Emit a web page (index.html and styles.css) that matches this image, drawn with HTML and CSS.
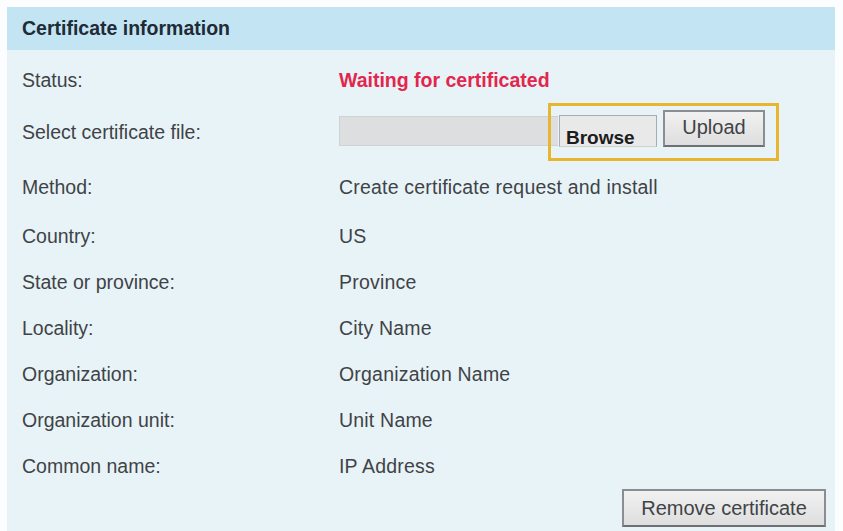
FILE: index.html
```html
<!DOCTYPE html>
<html lang="en">
<head>
  <meta charset="UTF-8" />
  <title>Certificate information</title>
  <link rel="stylesheet" href="styles.css">
</head>
<body>
  <div class="panel">
    <div class="panel-head">Certificate information</div>
    <div class="panel-body">
      <div class="row">
        <div class="label">Status:</div>
        <div class="value status">Waiting for certificated</div>
      </div>
      <div class="row file-row">
        <div class="label">Select certificate file:</div>
        <div class="value">
          <div class="file-path"></div>
          <div class="highlight">
            <button class="browse">Browse</button>
            <button class="btn upload">Upload</button>
          </div>
        </div>
      </div>
      <div class="row method-row">
        <div class="label">Method:</div>
        <div class="value">Create certificate request and install</div>
      </div>
      <div class="row">
        <div class="label">Country:</div>
        <div class="value">US</div>
      </div>
      <div class="row">
        <div class="label">State or province:</div>
        <div class="value">Province</div>
      </div>
      <div class="row">
        <div class="label">Locality:</div>
        <div class="value">City Name</div>
      </div>
      <div class="row">
        <div class="label">Organization:</div>
        <div class="value">Organization Name</div>
      </div>
      <div class="row">
        <div class="label">Organization unit:</div>
        <div class="value">Unit Name</div>
      </div>
      <div class="row">
        <div class="label">Common name:</div>
        <div class="value">IP Address</div>
      </div>
      <div class="actions">
        <button class="btn remove">Remove certificate</button>
      </div>
    </div>
  </div>
</body>
</html>
```

FILE: styles.css
```css
body {
  margin: 0;
  background: #fbfdfe;
  font-family: "Liberation Sans", Arial, sans-serif;
  color: #404346;
}
.panel {
  margin: 7px 8px 0 7px;
  height: 524px;
  background: #e8f3f8;
}
.panel-head {
  height: 43px;
  line-height: 43px;
  padding-left: 15px;
  background: #c3e5f3;
  font-size: 19.5px;
  font-weight: bold;
  color: #1f2b36;
}
.panel-body {
  padding-top: 7px;
}
.row {
  display: flex;
  align-items: center;
  height: 46px;
  font-size: 19.5px;
}
.label {
  width: 317px;
  padding-left: 15px;
}
.value {
  display: flex;
  align-items: center;
  letter-spacing: 0.2px;
}
.status {
  color: #e2264d;
  font-weight: bold;
  letter-spacing: 0;
}
.file-row {
  height: 58px;
}
.method-row {
  height: 52px;
}
.file-path {
  width: 218px;
  height: 28px;
  margin-top: -2px;
  background: #dcdedf;
  border: 1px solid #cfd2d3;
  border-right: none;
}
.highlight {
  display: flex;
  align-items: center;
  gap: 6px;
  margin-left: -10px;
  padding: 8px 11px 11px 8px;
  border: 3px solid #e8b62e;
}
.browse {
  width: 98px;
  height: 32px;
  margin-top: 1px;
  padding: 11px 0 0 6px;
  text-align: left;
  font-family: "Liberation Sans", Arial, sans-serif;
  font-size: 19px;
  font-weight: bold;
  color: #1c1c1c;
  background: #e9e9ea;
  border: 1px solid #a9abb0;
  border-bottom-color: #d0d0d0;
}
.btn {
  font-family: "Liberation Sans", Arial, sans-serif;
  font-size: 20px;
  color: #404346;
  background: linear-gradient(#f1f1f1, #dedede);
  border: 2px solid #8c8d91;
  border-bottom-color: #6f7074;
}
.upload {
  width: 102px;
  height: 37px;
  margin-top: -4px;
  padding: 0 0 3px;
}
.actions {
  display: flex;
  justify-content: flex-end;
  padding: 0 9px 0 0;
}
.remove {
  width: 204px;
  height: 38px;
  font-size: 20px;
}
```
